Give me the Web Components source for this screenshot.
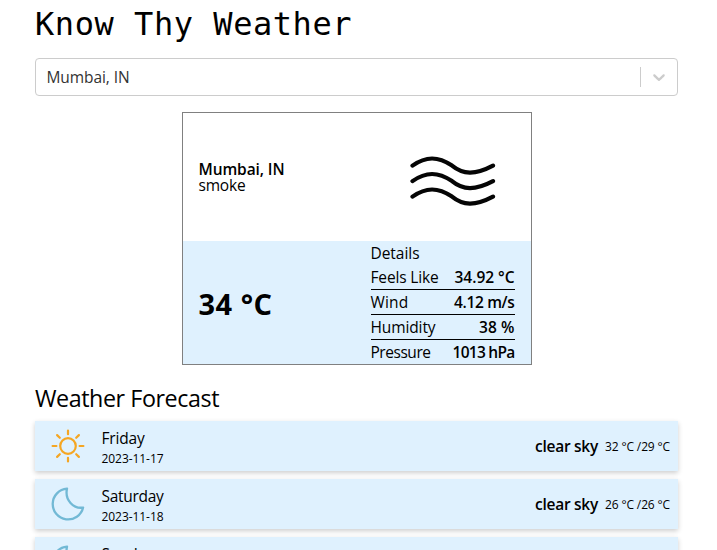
<!DOCTYPE html>
<html lang="en">
<head>
<meta charset="utf-8">
<title>Know Thy Weather</title>
<style>
html,body{margin:0;background:#fff}
body{font:15.5px/24px "Open Sans","Noto Sans",sans-serif;color:#000;height:550px;overflow:hidden}
</style>
</head>
<body>
<weather-app></weather-app>
<script>
const define = (name, html, init) => {
  const t = document.createElement('template');
  t.innerHTML = html;
  customElements.define(name, class extends HTMLElement {
    connectedCallback() {
      if (this.shadowRoot) return;
      const root = this.attachShadow({mode: 'open'});
      root.append(t.content.cloneNode(true));
      if (init) init(this, root);
    }
  });
};

// Tracks a text run so that it fills the width given in its attribute.
define('fit-text', `<style>:host{display:inline-block;white-space:nowrap}span{display:inline-block}</style><span><slot></slot></span>`, (el, root) => {
  const s = root.querySelector('span');
  const w = +el.getAttribute('width');
  const n = [...el.textContent].length;
  s.style.letterSpacing = (w - s.getBoundingClientRect().width) / n + 'px';
  el.style.width = w + 'px';
});

define('city-select', `<style>
:host{display:flex;align-items:center;box-sizing:border-box;height:38px;border:1px solid #ccc;border-radius:4px;padding-left:10.5px;color:#333}
.value{flex:1}
i{width:1px;height:20px;background:#ccc}
svg{width:20px;height:20px;padding:8px;fill:#ccc}
</style><div class="value"><slot></slot></div><i></i>
<svg viewBox="0 0 20 20"><path d="M4.516 7.548c0.436-0.446 1.043-0.481 1.576 0l3.908 3.747 3.908-3.747c0.533-0.481 1.141-0.446 1.574 0 0.436 0.445 0.408 1.197 0 1.615-0.406 0.418-4.695 4.502-4.695 4.502-0.217 0.223-0.502 0.335-0.787 0.335s-0.57-0.112-0.789-0.335c0 0-4.287-4.084-4.695-4.502s-0.436-1.17 0-1.615z"/></svg>`);

define('smoke-icon', `<style>:host{display:block;width:86px;height:52px}svg{display:block;fill:none;stroke:#050505;stroke-width:4.2;stroke-linecap:round}</style>
<svg width="86" height="52" viewBox="0 0 86 52"><defs><path id="w" d="M2.5 10.6C16 1.1 28 1.1 42 10.6C53 19.6 65 20.1 83 10.6"/></defs><use href="#w"/><use href="#w" y="15.5"/><use href="#w" y="31"/></svg>`);

define('sun-icon', `<style>:host{display:block;width:34px;height:34px}svg{display:block;fill:none;stroke:#f5a623;stroke-width:2.2;stroke-linecap:round}</style>
<svg width="34" height="34" viewBox="0 0 34 34"><circle cx="17" cy="17" r="7.8"/><path d="M17 1.6v3.6M17 28.8v3.6M1.6 17h3.8M28.6 17h3.8M6.1 6.1l2.7 2.7M25.2 25.2L27.9 27.9M27.9 6.1l-2.7 2.7M8.8 25.2L6.1 27.9"/></svg>`);

define('moon-icon', `<style>:host{display:block;width:34px;height:34px}svg{display:block;fill:none;stroke:#72b9d5;stroke-width:2.3;stroke-linejoin:round}</style>
<svg width="34" height="34" viewBox="0 0 34 34"><path d="M16 1.7A15.4 15.4 0 1 0 32.1 20.6C22.5 22 13.5 13 16 1.7Z"/></svg>`);

define('detail-row', `<style>
:host{display:flex;justify-content:space-between;height:24px;border-bottom:1px solid #000}
:host(:last-child){border-bottom:0}
.value{font-weight:600}
</style><slot name="label"></slot><div class="value"><slot></slot></div>`);

define('current-card', `<style>
:host{display:block;box-sizing:border-box;width:350px;border:1px solid #808080}
.top{height:128px;display:flex;justify-content:space-between;align-items:center;padding:0 35px 0 16px;box-sizing:border-box}
.place{line-height:16px;display:grid}
.city{font-weight:600}
.top smoke-icon{margin-top:8px}
.bottom{height:123px;display:flex;justify-content:space-between;background:#dff1fe;padding:0 16px;box-sizing:border-box}
.temp{font-size:29px;font-weight:700;align-self:center;padding-top:3px}
.details{width:144px}
</style>
<div class="top"><div class="place"><fit-text class="city" width="86">Mumbai, IN</fit-text><fit-text width="47">smoke</fit-text></div><smoke-icon></smoke-icon></div>
<div class="bottom"><fit-text class="temp" width="74">34 °C</fit-text>
<div class="details"><fit-text width="49" style="display:block">Details</fit-text>
<detail-row><fit-text slot="label" width="68">Feels Like</fit-text><fit-text width="60">34.92 °C</fit-text></detail-row>
<detail-row><fit-text slot="label" width="38">Wind</fit-text><fit-text width="60.5">4.12 m/s</fit-text></detail-row>
<detail-row><fit-text slot="label" width="65">Humidity</fit-text><fit-text width="35.5">38 %</fit-text></detail-row>
<detail-row><fit-text slot="label" width="60">Pressure</fit-text><fit-text width="62">1013 hPa</fit-text></detail-row>
</div></div>`);

define('forecast-row', `<style>
:host{display:flex;align-items:center;box-sizing:border-box;height:50px;padding:0 8px 0 16px;background:#dff1fe;box-shadow:0 2px 5px rgba(0,0,0,.2)}
.day{flex:1;display:grid;margin-left:16.5px}
.name{line-height:22px;padding-top:1px}.date{font-size:12px;line-height:18px;padding-top:1px;margin-bottom:-1px}
.sky{font-weight:600;margin-right:7px}
.range{font-size:12px;padding-top:1px}
</style><slot name="icon"></slot>
<div class="day"><div class="name"><slot name="day"></slot></div><div class="date"><slot name="date"></slot></div></div>
<div class="sky"><fit-text width="63">clear sky</fit-text></div><div class="range"><slot></slot></div>`);

define('weather-app', `<style>
:host{display:flex;flex-direction:column;width:643px;margin-left:35px}
h1,h2{margin:0;font-weight:400}
h1{box-sizing:border-box;height:58px;padding-top:1px;font:32px/46px "DejaVu Sans Mono",monospace}
current-card{margin:16px auto 0}
h2{box-sizing:border-box;font-size:23.3px;line-height:32px;height:40px;padding-top:1px;margin-top:16px}
.list{display:grid;gap:8px}
</style>
<h1><fit-text width="317">Know Thy Weather</fit-text></h1>
<city-select><fit-text width="83">Mumbai, IN</fit-text></city-select>
<current-card></current-card>
<h2><fit-text width="184">Weather Forecast</fit-text></h2>
<div class="list">
<forecast-row><sun-icon slot="icon"></sun-icon><fit-text slot="day" width="43">Friday</fit-text><fit-text slot="date" width="62">2023-11-17</fit-text><fit-text width="65">32 °C /29 °C</fit-text></forecast-row>
<forecast-row><moon-icon slot="icon"></moon-icon><fit-text slot="day" width="62">Saturday</fit-text><fit-text slot="date" width="62">2023-11-18</fit-text><fit-text width="65">26 °C /26 °C</fit-text></forecast-row>
<forecast-row><moon-icon slot="icon"></moon-icon><fit-text slot="day" width="52">Sunday</fit-text><fit-text slot="date" width="62">2023-11-19</fit-text><fit-text width="65">26 °C /26 °C</fit-text></forecast-row>
</div>`);
</script>
</body>
</html>
